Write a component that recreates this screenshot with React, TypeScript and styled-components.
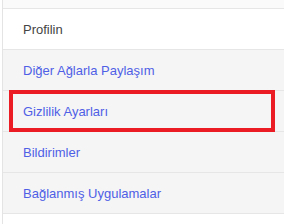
import styled, { createGlobalStyle } from "styled-components";

const Global = createGlobalStyle`
  body {
    margin: 0;
    background: #fff;
    font-family: "Liberation Sans", Arial, sans-serif;
  }
`;

const Page = styled.div`
  width: 284px;
  height: 224px;
  overflow: hidden;
  padding-left: 2px;
  box-sizing: border-box;
`;

const List = styled.ul`
  list-style: none;
  margin: 0;
  padding: 0;
  border-left: 1px solid #e4e4e4;
`;

const Item = styled.li<{ $active?: boolean; $boxed?: boolean }>`
  position: relative;
  height: 40px;
  display: flex;
  align-items: center;
  padding-left: 20px;
  border-bottom: 1px solid #e6e6e6;
  background: ${(p) => (p.$active ? "#fff" : "#f5f5f5")};
  color: ${(p) => (p.$active ? "#444" : "#4f5fe6")};
  font-size: 13px;

  ${(p) =>
    p.$boxed &&
    `
    &::after {
      content: "";
      position: absolute;
      left: 6px;
      top: -1px;
      width: 266px;
      height: 42px;
      border: 4px solid #ec1c24;
      box-sizing: border-box;
    }
  `}
`;

const TopRow = styled.li`
  height: 8px;
  background: #fafafa;
  border-bottom: 1px solid #e6e6e6;
`;

const Rest = styled.li`
  height: 20px;
  background: #fff;
`;

export default function App() {
  return (
    <Page>
      <Global />
      <List>
        <TopRow />
        <Item $active>Profilin</Item>
        <Item>Diğer Ağlarla Paylaşım</Item>
        <Item $boxed>Gizlilik Ayarları</Item>
        <Item>Bildirimler</Item>
        <Item>Bağlanmış Uygulamalar</Item>
        <Rest />
      </List>
    </Page>
  );
}
